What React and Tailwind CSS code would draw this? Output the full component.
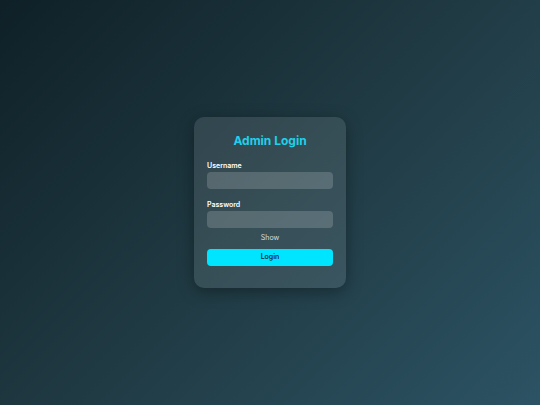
export default function App() {
  return (
    <div
      className="w-[540px] h-[405px] flex items-center justify-center bg-[linear-gradient(135deg,#0f2027,#203a43,#2c5364)]"
      style={{ fontFamily: "Inter, 'Noto Sans', sans-serif" }}
    >
      <div className="w-[152px] h-[171px] rounded-[10px] bg-white/10 px-[13px] pt-[16px] shadow-[0_4px_16px_rgba(0,0,0,0.35)] flex flex-col">
        <h1 className="text-center text-[12px] leading-[16px] font-bold text-[#1fd0ea]">Admin Login</h1>
        <label className="mt-[12px] block text-[7px] leading-[9px] font-semibold text-white">Username</label>
        <div className="mt-[2px] h-[17px] rounded-[4px] bg-white/[0.17]"></div>
        <label className="mt-[11px] block text-[7px] leading-[9px] font-semibold text-white">Password</label>
        <div className="mt-[2px] h-[17px] rounded-[4px] bg-white/[0.17]"></div>
        <div className="mt-[5px] text-center text-[7px] leading-[9px] text-[#d6dde0]">Show</div>
        <div className="mt-[7px] h-[17px] rounded-[4px] bg-[#00e5ff] flex items-center justify-center text-[7px] font-semibold text-[#12303a]">Login</div>
      </div>
    </div>
  );
}
